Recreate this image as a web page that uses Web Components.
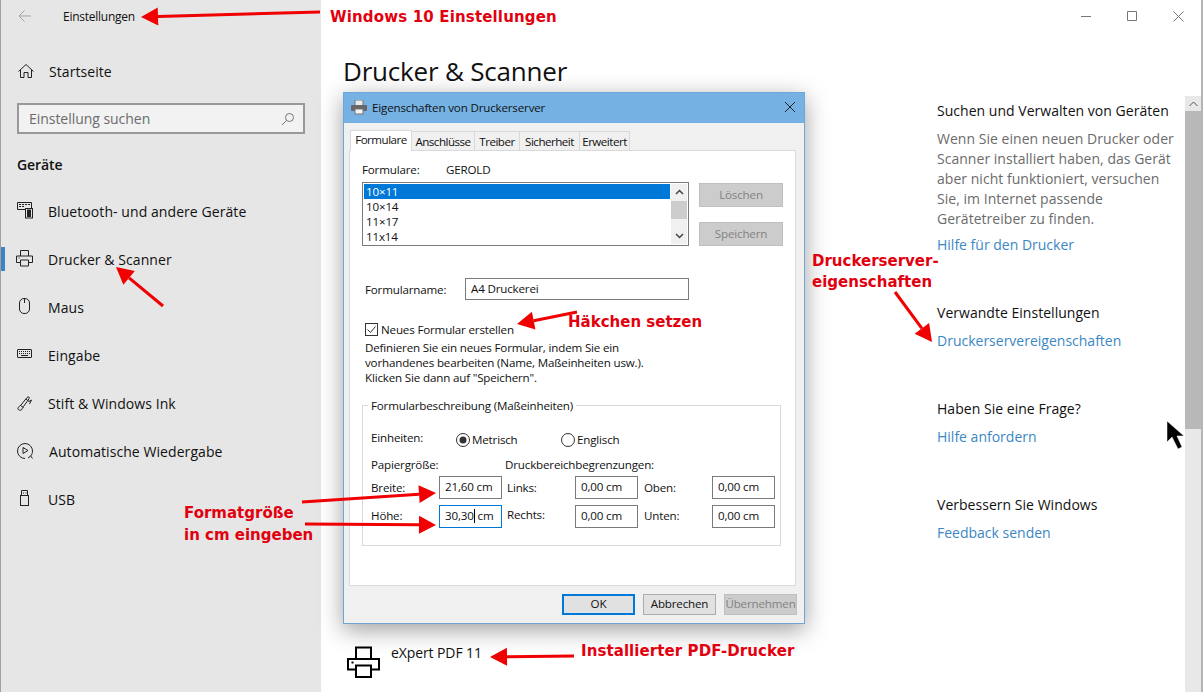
<!DOCTYPE html>
<html lang="de">
<head>
<meta charset="utf-8">
<title>Drucker &amp; Scanner</title>
<style>
  html, body { margin: 0; height: 100%; background: #fff; overflow: hidden; }
  body { font-family: "Open Sans", "Noto Sans", sans-serif; color: #111; }
</style>
</head>
<body>
<settings-app>
  <settings-sidebar slot="side">
    <nav-item icon="home" class="top" nudge>Startseite</nav-item>
    <nav-item icon="bt" slot="items">Bluetooth- und andere Geräte</nav-item>
    <nav-item icon="printer" active slot="items">Drucker &amp; Scanner</nav-item>
    <nav-item icon="mouse" slot="items">Maus</nav-item>
    <nav-item icon="keyboard" slot="items">Eingabe</nav-item>
    <nav-item icon="pen" slot="items">Stift &amp; Windows Ink</nav-item>
    <nav-item icon="autoplay" slot="items" nudge>Automatische Wiedergabe</nav-item>
    <nav-item icon="usb" slot="items">USB</nav-item>
  </settings-sidebar>
  <settings-content slot="main">
    <help-block heading="Suchen und Verwalten von Geräten" link="Hilfe für den Drucker">Wenn Sie einen neuen Drucker oder Scanner installiert haben, das Gerät aber nicht funktioniert, versuchen Sie, im Internet passende Gerätetreiber zu finden.</help-block>
    <help-block heading="Verwandte Einstellungen" link="Druckerservereigenschaften"></help-block>
    <help-block heading="Haben Sie eine Frage?" link="Hilfe anfordern"></help-block>
    <help-block heading="Verbessern Sie Windows" link="Feedback senden"></help-block>
  </settings-content>
  <server-dialog slot="over"></server-dialog>
  <note-layer slot="over"></note-layer>
</settings-app>

<script>
const PRINTER = '<path d="M4.500 6V.5h8V6M4.500 12.500H.5V6h16v6.500h-4"/><path d="M4.500 10h8v6h-8z"/><path d="M2.500 8h1"/>';
const ICONS = {
  home: '<path d="M2.500 9.500 10 2.500l7.500 7"/><path d="M4.500 8v7.500h3.500v-5h4v5h3.500V8"/>',
  bt: '<path d="M9 7.500H1.500v-7h14v5.500"/><path d="M3 2.500h2M6 2.500h2M9 2.500h2M12 2.500h2M3 4.500h2M6 4.500h2"/><rect x="9.500" y="6.500" width="7" height="9.500"/><rect x="11.500" y="8" width="3" height="2.500" fill="#222"/><rect x="11.500" y="11.500" width="3" height="3" fill="#222"/>',
  printer: PRINTER,
  mouse: '<rect x="3.500" y=".5" width="10" height="15" rx="4.500"/><path d="M8.500 .5V5"/>',
  keyboard: '<rect x="1.500" y="3.500" width="14" height="8" rx=".5"/><path d="M3 5.500h11M3 7.500h11" stroke-dasharray="1 1"/><path d="M5 9.500h7"/>',
  pen: '<path d="M6 15.500c-2 1.500-4.500.5-4-1.500.3-1.200 1.800-1.800 3-3l6-7.500c1.300-1.500 3-.3 2 1.300L7.500 12.500c-1 1.500-1.600 2.300-1.500 3z"/><path d="M10 5l3 2.500 2.500-1.500-2 4M4.500 11.500l3 2"/>',
  autoplay: '<path d="M9 16.500a7.500 7.500 0 1 1 7.500-7.500c0 2-.6 3.500-1.800 5"/><path d="M7 5.500v6l5-3z"/><path d="M12 16l2.700-2 1.800 2.500"/>',
  usb: '<path d="M5.500 5.500v-5h6v5"/><rect x="4.500" y="5.500" width="8" height="10"/><path d="M7 3h1M9.500 3h1"/>'
};

class SettingsApp extends HTMLElement {
  constructor() {
    super();
    this.attachShadow({mode: 'open'});
    this.shadowRoot.innerHTML = `
      <style>
        :host { display: flex; position: relative; width: 1203px; height: 692px; overflow: hidden; background: #fff; }
        .main { flex: 1; min-width: 0; display: flex; }
      </style>
      <slot name="side"></slot>
      <div class="main"><slot name="main"></slot></div>
      <slot name="over"></slot>
    `;
  }
}

class SettingsSidebar extends HTMLElement {
  constructor() {
    super();
    this.attachShadow({mode: 'open'});
    this.shadowRoot.innerHTML = `
      <style>
        :host { display: block; width: 321px; height: 692px; flex: none; box-sizing: border-box; background: #e6e6e6; border-left: 1px solid #a0a0a0; font-size: 14px; }
        .bar { display: flex; align-items: center; height: 32px; }
        .bar svg { margin-left: 17px; }
        .bar span { margin-left: 32px; font-size: 12px; color: #111; letter-spacing: -.25px; }
        .top { display: block; margin-top: 16px; }
        .search { display: flex; align-items: center; justify-content: space-between; box-sizing: border-box; width: 288px; height: 31px; margin: 7px 0 0 16px; padding: 0 8px 0 10px; border: 2px solid #999; background: #f2f2f2; color: #6b6b6b; font-size: 14px; letter-spacing: -.04px; }
        .group { box-sizing: border-box; height: 54px; padding: 6px 0 0 16px; display: flex; align-items: center; font-weight: 600; font-size: 14px; color: #111; letter-spacing: -.1px; }
      </style>
      <div class="bar">
        <svg width="13" height="12" viewBox="0 0 13 12" fill="none" stroke="#a3a3a3"><path d="M1 6h12M6.500 .5 1 6l5.500 5.500"/></svg>
        <span>Einstellungen</span>
      </div>
      <div class="top"><slot></slot></div>
      <div class="search"><span>Einstellung suchen</span>
        <svg width="14" height="14" viewBox="0 0 14 14" fill="none" stroke="#777"><circle cx="8.500" cy="5.500" r="4"/><path d="M5.500 8.500 1 13"/></svg>
      </div>
      <div class="group">Geräte</div>
      <slot name="items"></slot>
    `;
  }
}

class NavItem extends HTMLElement {
  constructor() {
    super();
    this.attachShadow({mode: 'open'});
    const icon = ICONS[this.getAttribute('icon')];
    this.shadowRoot.innerHTML = `
      <style>
        :host { display: flex; align-items: center; position: relative; box-sizing: border-box; height: 48px; padding: 0 0 2px 15px; font-size: 14px; letter-spacing: .07px; color: #111; }
        svg { flex: none; width: 18px; height: 18px; margin-right: 14px; }
        :host([nudge]) svg { margin-right: 15px; }
        :host([active])::before { content: ""; position: absolute; left: 0; top: 11px; width: 4px; height: 24px; background: #3d84c4; }
      </style>
      <svg viewBox="0 0 18 18" fill="none" stroke="#222">${icon}</svg><slot></slot>
    `;
  }
}

class SettingsContent extends HTMLElement {
  constructor() {
    super();
    this.attachShadow({mode: 'open'});
    this.shadowRoot.innerHTML = `
      <style>
        :host { display: flex; flex-direction: column; width: 882px; height: 692px; box-sizing: border-box; border-right: 2px solid #b5b5b5; }
        .controls { display: flex; justify-content: flex-end; height: 32px; flex: none; }
        .controls span { width: 46px; display: flex; align-items: center; justify-content: center; }
        .row { display: flex; flex: 1; min-height: 0; }
        .left { flex: 1; display: flex; flex-direction: column; padding: 19px 0 14px 22px; }
        h1 { margin: 0; font-weight: 400; font-size: 26px; line-height: 40px; color: #111; letter-spacing: -.2px; }
        .printer { display: flex; margin-top: auto; font-size: 14px; letter-spacing: -.1px; color: #111; }
        .printer svg { margin: 0 11px 0 4px; }
        .printer span { line-height: 16px; margin-top: -1px; }
        aside { width: 248px; box-sizing: border-box; padding-top: 69px; flex: none; }
        .scroll { width: 16px; flex: none; margin-top: 64px; background: #e8e8e8; display: flex; flex-direction: column; }
        .scroll .up { height: 15px; display: flex; align-items: center; justify-content: center; }
        .scroll .thumb { height: 318px; background: #b8b8b8; }
      </style>
      <div class="controls">
        <span><svg width="10" height="10" viewBox="0 0 10 10" stroke="#777" fill="none"><path d="M0 5.500h10"/></svg></span>
        <span><svg width="10" height="10" viewBox="0 0 10 10" stroke="#777" fill="none"><path d="M.5 .5h9v9h-9z"/></svg></span>
        <span><svg width="11" height="11" viewBox="0 0 11 11" stroke="#777" fill="none"><path d="M.5 .5l10 10M10.500 .5l-10 10"/></svg></span>
      </div>
      <div class="row">
        <div class="left">
          <h1>Drucker &amp; Scanner</h1>
          <div class="printer">
            <svg width="33" height="32" viewBox="0 0 33 32" fill="none" stroke="#000" stroke-width="2"><path d="M9 13V1.500h15V13M9 23.500H1V13h31v10.500h-8"/><path d="M9 19.500h15V31H9z"/><path d="M4.500 16.500h2"/></svg>
            <span>eXpert PDF 11</span>
          </div>
        </div>
        <aside><slot></slot></aside>
        <div class="scroll">
          <div class="up"><svg width="9" height="6" viewBox="0 0 9 6" fill="none" stroke="#555"><path d="M.5 5 4.500 1l4 4"/></svg></div>
          <div class="thumb"></div>
        </div>
      </div>
    `;
  }
}

class HelpBlock extends HTMLElement {
  constructor() {
    super();
    this.attachShadow({mode: 'open'});
    this.shadowRoot.innerHTML = `
      <style>
        :host { display: block; margin-bottom: 48px; font-size: 14px; line-height: 20px; letter-spacing: .03px; }
        h3 { margin: 0 0 8px; font-weight: 400; font-size: 14px; color: #111; }
        p { margin: 0 0 6px; color: #6b6b6b; width: 244px; }
        a { color: #3b87c4; text-decoration: none; display: block; letter-spacing: 0; }
      </style>
      <h3>${this.getAttribute('heading')}</h3>
      <p id="t"><slot></slot></p>
      <a>${this.getAttribute('link')}</a>
    `;
    if (!this.textContent.trim()) this.shadowRoot.getElementById('t').remove();
  }
}

class DlgField extends HTMLElement {
  constructor() {
    super();
    this.attachShadow({mode: 'open'});
    this.shadowRoot.innerHTML = `
      <style>
        :host { display: flex; align-items: center; box-sizing: border-box; height: 23px; padding: 0 0 2px 5px; background: #fff; border: 1px solid #7a7a7a; white-space: nowrap; }
        :host([focus]) { border-color: #0078d7; }
      </style>
      <slot></slot>
    `;
  }
}

class DlgButton extends HTMLElement {
  constructor() {
    super();
    this.attachShadow({mode: 'open'});
    this.shadowRoot.innerHTML = `
      <style>
        :host { display: flex; align-items: center; justify-content: center; box-sizing: border-box; padding-bottom: 2px; background: #e1e1e1; border: 1px solid #adadad; color: #111; }
        :host([disabled]) { background: #ccc; border-color: #bfbfbf; color: #838383; }
        :host([primary]) { border: 2px solid #0078d7; }
      </style>
      <slot></slot>
    `;
  }
}

class ServerDialog extends HTMLElement {
  constructor() {
    super();
    this.attachShadow({mode: 'open'});
    this.shadowRoot.innerHTML = `
      <style>
        :host { display: block; position: absolute; left: 343px; top: 92px; width: 462px; height: 532px; box-sizing: border-box; background: #f0f0f0; border: 1px solid #6ea6d8; box-shadow: 0 6px 22px rgba(0,0,0,.38); font-size: 11.6px; color: #111; letter-spacing: -.17px; }
        .title { display: flex; align-items: center; height: 30px; padding: 0 8px 2px 7px; box-sizing: border-box; background: #75b1e3; }
        .title svg.p { margin-right: 5px; }
        .title span { flex: 1; }
        .body { padding: 7px 7px 0 5px; }
        .tabs { display: flex; height: 20px; padding-left: 1px; align-items: flex-end; position: relative; z-index: 1; letter-spacing: -.5px; }
        .tabs span { box-sizing: border-box; height: 19px; margin-left: -1px; padding-top: 1px; display: flex; justify-content: center; align-items: center; background: #f0f0f0; border: 1px solid #d9d9d9; border-bottom: none; }
        .tabs span.on { height: 21px; background: #fff; margin-bottom: -1px; margin-left: 0; padding: 0 0 4px; }
        .panel { box-sizing: border-box; width: 447px; height: 436px; background: #fff; border: 1px solid #d9d9d9; padding: 10px 12px 0; }
        .line { display: flex; height: 16px; align-items: center; }
        .line b { font-weight: 400; width: 84px; }
        .lists { display: grid; grid-template-columns: 327px 84px; column-gap: 10px; margin-top: 5px; height: 64px; }
        .list { position: relative; box-sizing: border-box; height: 64px; background: #fff; border: 1px solid #7a7a7a; padding: 1px; line-height: 15px; }
        .list div { padding-left: 2px; width: 304px; height: 15px; }
        .list .sel { background: #0078d7; color: #fff; }
        .list .sb { position: absolute; right: 1px; top: 1px; bottom: 1px; width: 16px; height: auto; padding: 0; background: #f0f0f0; display: flex; flex-direction: column; align-items: center; justify-content: space-between; }
        .sb svg { margin: 5px 0; }
        .sb i { position: absolute; left: 0; right: 0; top: 17px; height: 18px; background: #cdcdcd; }
        .btns { display: flex; flex-direction: column; justify-content: space-between; padding-top: 1px; }
        .btns dlg-button { height: 24px; }
        .name { display: flex; align-items: center; margin: 32px 0 0 3px; }
        .name span { width: 100px; }
        .name dlg-field { width: 224px; height: 22px; }
        .check { display: flex; align-items: center; margin: 22px 0 0 3px; height: 14px; }
        .check svg { margin-right: 3px; }
        .desc { margin: 4px 0 0 3px; line-height: 15px; }
        fieldset { box-sizing: border-box; width: 419px; height: 148px; margin: 13px 0 0; padding: 0 8px; border: 1px solid #d9d9d9; min-inline-size: 0; }
        legend { padding: 0 3px; margin-left: -3px; line-height: 15px; }
        .units { display: flex; margin-top: 17px; height: 16px; align-items: center; }
        .units > span:first-child { width: 85px; position: relative; top: -1px; }
        .radio { display: flex; align-items: center; width: 105px; margin-top: 3px; }
        .radio svg { margin-right: 2px; }
        .heads { display: flex; margin-top: 10px; height: 16px; align-items: center; }
        .heads span:first-child { width: 134px; }
        .grid { display: grid; grid-template-columns: 68px 63px 5px 68px 63px 6px 68px 63px; row-gap: 6px; margin-top: 4px; align-items: center; }
        .foot { display: flex; justify-content: flex-end; gap: 8px; margin: 8px 0 0 0; }
        .foot dlg-button { width: 73px; height: 21px; }
        .up1 { margin-bottom: 2px; }
        .up2 { margin-bottom: 4px; }
        .caret { display: inline-block; width: 1px; height: 14px; background: #000; vertical-align: -3px; }
      </style>
      <div class="title">
        <svg class="p" width="16" height="15" viewBox="0 0 16 15"><rect x="4" y="0" width="8" height="6" fill="#e9e9e9" stroke="#777"/><rect x="0" y="5" width="16" height="6" rx="1" fill="#666"/><rect x="4" y="9" width="8" height="5" fill="#f4f4f4" stroke="#777"/></svg>
        <span>Eigenschaften von Druckerserver</span>
        <svg width="12" height="12" viewBox="0 0 12 12" fill="none" stroke="#222"><path d="M1 1l10 10M11 1 1 11"/></svg>
      </div>
      <div class="body">
        <div class="tabs">
          <span class="on" style="width:62px">Formulare</span>
          <span style="width:64px">Anschlüsse</span>
          <span style="width:46px">Treiber</span>
          <span style="width:61px">Sicherheit</span>
          <span style="width:51px">Erweitert</span>
        </div>
        <div class="panel">
          <div class="line"><b>Formulare:</b><span>GEROLD</span></div>
          <div class="lists">
            <div class="list">
              <div class="sel">10×11</div><div>10×14</div><div>11×17</div><div>11x14</div>
              <div class="sb">
                <i></i>
                <svg width="9" height="6" viewBox="0 0 9 6" fill="none" stroke="#444" stroke-width="1.500"><path d="M1 5 4.500 1.500 8 5"/></svg>
                <svg width="9" height="6" viewBox="0 0 9 6" fill="none" stroke="#444" stroke-width="1.500"><path d="M1 1l3.500 3.500L8 1"/></svg>
              </div>
            </div>
            <div class="btns"><dlg-button disabled>Löschen</dlg-button><dlg-button disabled>Speichern</dlg-button></div>
          </div>
          <div class="name"><span>Formularname:</span><dlg-field>A4 Druckerei</dlg-field></div>
          <div class="check">
            <svg width="13" height="13" viewBox="0 0 13 13" fill="#fff" stroke="#333"><rect x=".5" y=".5" width="12" height="12"/><path d="M2.500 6.500l3 3 5-6" fill="none"/></svg>
            <span>Neues Formular erstellen</span>
          </div>
          <div class="desc">Definieren Sie ein neues Formular, indem Sie ein<br>vorhandenes bearbeiten (Name, Maßeinheiten usw.).<br>Klicken Sie dann auf "Speichern".</div>
          <fieldset>
            <legend>Formularbeschreibung (Maßeinheiten)</legend>
            <div class="units">
              <span>Einheiten:</span>
              <span class="radio"><svg width="14" height="14" viewBox="0 0 14 14" fill="#fff" stroke="#333"><circle cx="7" cy="7" r="6.500"/><circle cx="7" cy="7" r="3.500" fill="#333" stroke="none"/></svg>Metrisch</span>
              <span class="radio"><svg width="14" height="14" viewBox="0 0 14 14" fill="#fff" stroke="#333"><circle cx="7" cy="7" r="6.500"/></svg>Englisch</span>
            </div>
            <div class="heads"><span>Papiergröße:</span><span>Druckbereichbegrenzungen:</span></div>
            <div class="grid">
              <span>Breite:</span><dlg-field>21,60 cm</dlg-field><span></span>
              <span>Links:</span><dlg-field>0,00 cm</dlg-field><span></span>
              <span>Oben:</span><dlg-field>0,00 cm</dlg-field>
              <span class="up1">Höhe:</span><dlg-field focus><span>30,30<span class="caret"></span> cm</span></dlg-field><span></span>
              <span class="up2">Rechts:</span><dlg-field>0,00 cm</dlg-field><span></span>
              <span class="up1">Unten:</span><dlg-field>0,00 cm</dlg-field>
            </div>
          </fieldset>
        </div>
        <div class="foot">
          <dlg-button primary>OK</dlg-button>
          <dlg-button>Abbrechen</dlg-button>
          <dlg-button disabled>Übernehmen</dlg-button>
        </div>
      </div>
    `;
  }
}

// red call-outs drawn on top of the screenshot: tail x,y -> tip x,y
const ARROWS = [[320,12,141,17],[163,306,116,267],[577,312,517,324],[895,292,932,342],[302,502,436,493],[305,524,436,525],[574,656,490,657]];
const NOTES = [
  ['Windows 10 Einstellungen', 330, 7, .16, 21],
  ['Häkchen setzen', 568, 312, 0, 21],
  ['Druckerserver-<br>eigenschaften', 812, 251, 0, 21],
  ['Formatgröße<br>in cm eingeben', 184, 502, 0, 22],
  ['Installierter PDF-Drucker', 581, 641, .08, 21]
];

class NoteLayer extends HTMLElement {
  constructor() {
    super();
    this.attachShadow({mode: 'open'});
    const arrows = ARROWS.map(([x1, y1, x2, y2]) => {
      const len = Math.hypot(x2 - x1, y2 - y1), ux = (x2 - x1) / len, uy = (y2 - y1) / len;
      const bx = x2 - ux * 17, by = y2 - uy * 17;
      return `<line x1="${x1}" y1="${y1}" x2="${bx}" y2="${by}" stroke="#f00000" stroke-width="3"/>` +
        `<polygon fill="#f00000" points="${x2},${y2} ${bx - uy * 9},${by + ux * 9} ${bx + uy * 9},${by - ux * 9}"/>`;
    }).join('');
    const notes = NOTES.map(([t, x, y, s, h]) => `<div style="left:${x}px;top:${y}px;letter-spacing:${s}px;line-height:${h}px">${t}</div>`).join('');
    this.shadowRoot.innerHTML = `
      <style>
        :host { display: block; position: absolute; inset: 0; pointer-events: none; }
        svg { position: absolute; left: 0; top: 0; }
        div { position: absolute; font: 700 15px "DejaVu Sans", sans-serif; color: #e2000f; white-space: nowrap; }
      </style>
      <svg width="1203" height="692">${arrows}
        <polygon fill="#000" stroke="#fff" stroke-width=".5" points="1167,421 1167,442 1172,437 1178,449 1182,447 1177,436 1184,436"/>
      </svg>
      ${notes}
    `;
  }
}

customElements.define('settings-app', SettingsApp);
customElements.define('settings-sidebar', SettingsSidebar);
customElements.define('nav-item', NavItem);
customElements.define('settings-content', SettingsContent);
customElements.define('help-block', HelpBlock);
customElements.define('dlg-field', DlgField);
customElements.define('dlg-button', DlgButton);
customElements.define('server-dialog', ServerDialog);
customElements.define('note-layer', NoteLayer);
</script>
</body>
</html>
